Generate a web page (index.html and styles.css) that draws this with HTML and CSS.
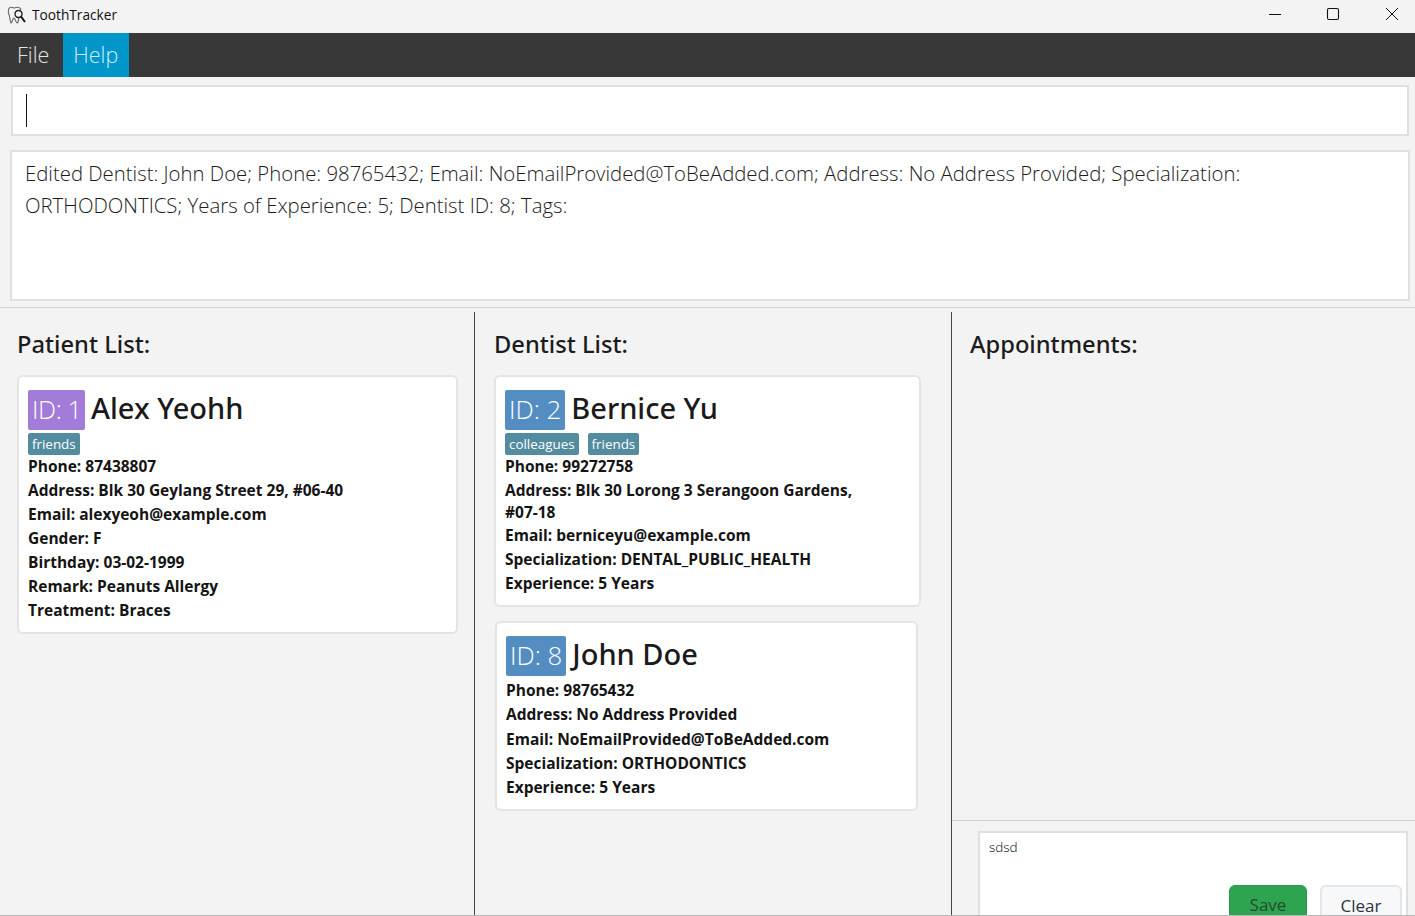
FILE: index.html
```html
<!DOCTYPE html>
<html lang="en">
<head>
<meta charset="utf-8">
<title>ToothTracker</title>
<link rel="stylesheet" href="styles.css">
</head>
<body>
<div class="app">
  <header class="titlebar">
    <svg class="logo" viewBox="0 0 20 20" width="20" height="20" fill="none" stroke="#666" stroke-width="1.1">
      <path d="M3 2.500C1 3.500 1 7 2 9.500C3 12 2.800 16 4 18C5.200 18 5.500 13.500 7 13C8.500 13.500 8.500 18 10.500 18C11.500 16.500 11.500 15 11.800 13"/>
      <path d="M3 2.500C5 1.500 6.500 3 7.500 3C9 3 10 1.500 12 2.500C13.500 3.200 14 4.500 13.800 5.500"/>
      <circle cx="11.500" cy="9" r="3.500" stroke="#222" stroke-width="1.400"/>
      <path d="M14 11.500L18 17" stroke="#111" stroke-width="2"/>
    </svg>
    <span class="app-name">ToothTracker</span>
    <div class="win-controls">
      <svg width="14" height="14" viewBox="0 0 14 14"><path d="M1 7.500H13" stroke="#111" stroke-width="1"/></svg>
      <svg width="14" height="14" viewBox="0 0 14 14" fill="none"><rect x="1.500" y="1.500" width="11" height="11" rx="1.500" stroke="#111" stroke-width="1.100"/></svg>
      <svg class="win-close" width="14" height="14" viewBox="0 0 14 14"><path d="M1 1L13 13M13 1L1 13" stroke="#111" stroke-width="1"/></svg>
    </div>
  </header>
  <nav class="menubar">
    <span class="menu-item">File</span>
    <span class="menu-item active">Help</span>
  </nav>
  <section class="command-wrap">
    <div class="command-box"><span class="caret"></span></div>
  </section>
  <section class="result-wrap">
    <div class="result-box">Edited Dentist: John Doe; Phone: 98765432; Email: NoEmailProvided@ToBeAdded.com; Address: No Address Provided; Specialization: ORTHODONTICS; Years of Experience: 5; Dentist ID: 8; Tags:</div>
  </section>
  <main class="columns">
    <section class="col col-patient">
      <h2 class="col-title">Patient List:</h2>
      <article class="card card-alex">
        <div class="card-head"><span class="id-badge purple id-narrow">ID: 1</span><span class="name">Alex Yeohh</span></div>
        <div class="tags"><span class="tag">friends</span></div>
        <p class="field">Phone: 87438807</p>
        <p class="field">Address: Blk 30 Geylang Street 29, #06-40</p>
        <p class="field">Email: alexyeoh@example.com</p>
        <p class="field">Gender: F</p>
        <p class="field">Birthday: 03-02-1999</p>
        <p class="field">Remark: Peanuts Allergy</p>
        <p class="field">Treatment: Braces</p>
      </article>
    </section>
    <section class="col col-dentist">
      <h2 class="col-title">Dentist List:</h2>
      <article class="card card-bernice">
        <div class="card-head"><span class="id-badge blue">ID: 2</span><span class="name">Bernice Yu</span></div>
        <div class="tags"><span class="tag">colleagues</span><span class="tag">friends</span></div>
        <p class="field">Phone: 99272758</p>
        <p class="field wrap">Address: Blk 30 Lorong 3 Serangoon Gardens, #07-18</p>
        <p class="field">Email: berniceyu@example.com</p>
        <p class="field">Specialization: DENTAL_PUBLIC_HEALTH</p>
        <p class="field">Experience: 5 Years</p>
      </article>
      <article class="card card-john">
        <div class="card-head"><span class="id-badge blue">ID: 8</span><span class="name">John Doe</span></div>
        <p class="field">Phone: 98765432</p>
        <p class="field">Address: No Address Provided</p>
        <p class="field">Email: NoEmailProvided@ToBeAdded.com</p>
        <p class="field">Specialization: ORTHODONTICS</p>
        <p class="field">Experience: 5 Years</p>
      </article>
    </section>
    <section class="col col-appts">
      <h2 class="col-title">Appointments:</h2>
      <div class="spacer"></div>
      <div class="notes-wrap">
        <div class="notes">
          <div class="notes-text">sdsd</div>
          <div class="notes-actions">
            <button class="btn save" type="button">Save</button>
            <button class="btn clear" type="button">Clear</button>
          </div>
        </div>
      </div>
    </section>
  </main>
</div>
</body>
</html>
```
FILE: styles.css
```css
* { box-sizing: border-box; }
html, body { margin: 0; height: 100%; overflow: hidden; }
body { font-family: "Open Sans", "Noto Sans", "Liberation Sans", sans-serif; color: #1c1c1c; background: #f3f3f3; }
.app { width: 1415px; height: 916px; display: flex; flex-direction: column; overflow: hidden; border-bottom: 1px solid #b8b8b8; }
.titlebar { height: 33px; flex: none; display: flex; align-items: center; padding: 0 0 4px 7px; background: #f3f3f3; }
.logo { flex: none; }
.app-name { margin-left: 5px; font-size: 13.700px; color: #111; }
.win-controls { margin-left: auto; display: flex; gap: 44px; padding: 0 16px 2px 0; align-items: center; }
.win-controls svg { display: block; }
.win-close { margin-left: 1px; }
.menubar { height: 44px; flex: none; display: flex; background: #383838; }
.menu-item { padding: 0 15px 0 17px; line-height: 43px; font-size: 21.500px; font-weight: 300; color: #e6e6e6; }
.menu-item.active { background: #0096c9; color: #cdeefa; padding: 0 11px 0 10px; margin-left: -1px; }
.command-wrap { flex: none; padding: 8px 6px 0 11px; }
.command-box { height: 51px; background: #fff; border: 2px solid #e0e0e0; padding: 7px 13px; }
.caret { display: block; width: 1px; height: 33px; background: #111; }
.result-wrap { flex: none; padding: 14px 5px 6px 10px; border-bottom: 1px solid #d4d4d4; }
.result-box { height: 151px; background: #fff; border: 2px solid #e0e0e0; padding: 5px 13px; font-size: 20.330px; font-weight: 300; line-height: 32px; color: #1c1c1c; }
.columns { flex: 1; min-height: 0; display: flex; padding-top: 4px; }
.col { display: flex; flex-direction: column; min-width: 0; }
.col-patient { width: 475px; border-right: 1px solid #444; padding: 0 16px 0 17px; }
.col-dentist { width: 477px; border-right: 1px solid #444; padding: 0 30px 0 19px; }
.col-appts { flex: 1; }
.col-title { margin: 15px 0 14px; font-family: "Noto Sans", "Open Sans", sans-serif; font-size: 23.700px; line-height: 34px; font-weight: 500; color: #1c1c1c; }
.col-appts .col-title { margin-left: 18px; }
.card { background: #fff; border: 2px solid #e4e4e4; border-radius: 6px; padding: 13px 9px 9px; }
.card-alex { height: 259px; }
.card-bernice { height: 232px; margin-bottom: 14px; }
.card-john { height: 190px; width: 423px; margin-left: 1px; }
.card-john .card-head { margin-bottom: 2px; }
.card-head { display: flex; align-items: center; height: 40px; }
.id-badge { height: 40px; line-height: 38px; padding: 0 4px; border-radius: 2px; color: #fff; font-size: 25.800px; font-weight: 300; }
.id-narrow { width: 57px; font-size: 25.500px; letter-spacing: -0.400px; white-space: nowrap; }
.purple { background: #a37cd9; }
.blue { background: #548dc2; }
.name { margin: -5px 0 0 6px; font-family: "Noto Sans", "Open Sans", sans-serif; font-size: 29px; line-height: 38px; color: #1a1a1a; font-weight: 500; }
.tags { display: flex; gap: 9px; margin: 3px 0 -1px; height: 22px; }
.tag { background: #538b9f; color: #fff; font-size: 13.400px; line-height: 22px; padding: 0 4px; border-radius: 2px; }
.field { margin: 0; font-size: 15.500px; font-weight: 700; line-height: 24px; color: #141414; white-space: nowrap; }
.field.wrap { white-space: normal; max-width: 360px; line-height: 22px; padding-top: 1px; }
.card-john .field { line-height: 24.300px; }
.spacer { flex: 1; }
.notes-wrap { flex: none; height: 95px; border-top: 1px solid #cfcfcf; padding: 10px 7px 0 26px; overflow: hidden; }
.notes { height: 120px; background: #fff; border: 2px solid #e0e0e0; padding: 5px 0 0 9px; }
.notes-text { font-size: 13.500px; font-weight: 300; line-height: 19px; color: #000; }
.notes-actions { display: flex; justify-content: flex-end; gap: 13px; margin-top: 28px; padding-right: 4px; }
.btn { height: 40px; padding: 0; font: 400 17px/38px "Open Sans", "Noto Sans", sans-serif; border-radius: 6px; text-align: center; flex: none; }
.save { width: 78px; background: #2ea44f; border: 1px solid #2a9a49; color: #1f4d2e; }
.clear { width: 82px; background: #f6f8fa; border: 2px solid #e3e5e8; color: #2c3440; }
```
